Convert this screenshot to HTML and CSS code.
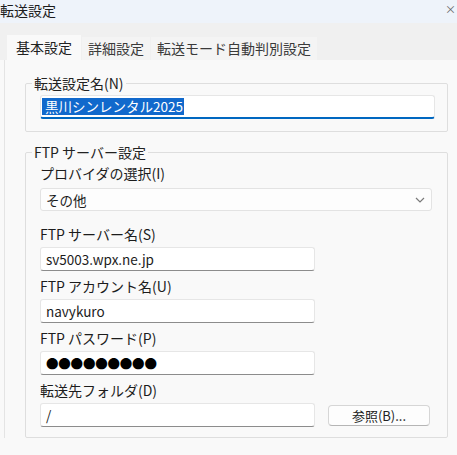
FILE: index.html
```html
<!DOCTYPE html>
<html lang="ja">
<head>
    <meta charset="UTF-8">
    <meta name="viewport" content="width=device-width, initial-scale=1.0">
    <title>転送設定</title>
    <link rel="stylesheet" href="styles.css">
</head>
<body>
    <div class="titlebar">
        <span class="title">転送設定</span>
        <span class="close">×</span>
    </div>
    <div class="tabs">
        <div class="tab active">基本設定</div>
        <div class="tab">詳細設定</div>
        <div class="tab">転送モード自動判別設定</div>
    </div>
    <div class="panel">
        <fieldset class="group">
            <legend>転送設定名(N)</legend>
            <div class="input wide focus"><span class="selected">黒川シンレンタル2025</span></div>
        </fieldset>

        <fieldset class="group second">
            <legend>FTP サーバー設定</legend>
            <div class="label first">プロバイダの選択(I)</div>
            <div class="select">
                <span>その他</span>
                <svg class="chevron" width="10" height="6" viewBox="0 0 10 6">
                    <path d="M1 1 L5 5 L9 1" fill="none" stroke="#7a7a7a" stroke-width="1.2"/>
                </svg>
            </div>

            <div class="label gap">FTP サーバー名(S)</div>
            <div class="input">sv5003.wpx.ne.jp</div>

            <div class="label">FTP アカウント名(U)</div>
            <div class="input">navykuro</div>

            <div class="label">FTP パスワード(P)</div>
            <div class="input"><span class="dots">●●●●●●●●●</span></div>

            <div class="label">転送先フォルダ(D)</div>
            <div class="row">
                <div class="input">/</div>
                <div class="button">参照(B)...</div>
            </div>
        </fieldset>
    </div>
</body>
</html>
```

FILE: styles.css
```css
body {
    margin: 0;
    width: 457px;
    height: 455px;
    overflow: hidden;
    background-color: #f9f9f9;
    font-family: "Noto Sans CJK JP", "Noto Sans", sans-serif;
    font-size: 14px;
    color: #1c1c1c;
}

.titlebar {
    height: 23px;
    display: flex;
    justify-content: space-between;
    align-items: center;
    background-color: #eef3fa;
    overflow: hidden;
}
.title {
    line-height: 20px;
    margin-top: -3px;
}
.close {
    font-size: 11px;
    line-height: 12px;
    color: #666;
    margin-right: 1px;
    margin-top: -6px;
}

.tabs {
    height: 37px;
    display: flex;
    align-items: flex-end;
    gap: 1px;
    padding-left: 7px;
    background-color: #f0f0f0;
}
.tab {
    height: 23px;
    line-height: 22px;
    padding: 0 6px;
    color: #3a3a3a;
    background-color: #f4f4f4;
}
.tab.active {
    height: 25px;
    line-height: 24px;
    padding: 0 9px;
    color: #222;
    background-color: #f9f9f9;
}

.panel {
    margin-left: 4px;
    border-left: 1px solid #e4e4e4;
    padding: 14px 9px 0 20px;
}

.group {
    margin: 0;
    padding: 0 12px 12px 14px;
    border: 1px solid #dedede;
    border-radius: 2px;
    min-width: 0;
}
.group.second {
    margin-top: 11px;
    padding-bottom: 10px;
}
.group legend {
    padding: 0 2px;
    margin-left: -8px;
    line-height: 18px;
    color: #222;
}

.label {
    line-height: 18px;
    margin-top: 6px;
}
.label.first {
    margin-top: 3px;
}
.label.gap {
    margin-top: 14px;
}

.input {
    box-sizing: border-box;
    width: 275px;
    height: 24px;
    margin-top: 4px;
    padding-left: 5px;
    line-height: 22px;
    font-size: 13.5px;
    background-color: #fff;
    border: 1px solid #e6e6e6;
    border-bottom-color: #8c8c8c;
    border-radius: 3px;
}
.input.wide {
    width: 395px;
    margin-top: 3px;
    padding-left: 1px;
}
.input.focus {
    border-bottom: 2px solid #0067c0;
    line-height: 20px;
}
.selected {
    display: inline-block;
    padding: 0 1px 0 3px;
    line-height: 17px;
    color: #fff;
    background-color: #1169cc;
}
.dots {
    font-size: 12.5px;
    letter-spacing: -0.2px;
    color: #000;
}

.select {
    box-sizing: border-box;
    width: 392px;
    height: 23px;
    margin-top: 6px;
    padding: 0 6px 0 5px;
    display: flex;
    align-items: center;
    justify-content: space-between;
    font-size: 13.5px;
    background-color: #fdfdfd;
    border: 1px solid #e3e3e3;
    border-radius: 3px;
}

.row {
    display: flex;
    align-items: center;
    gap: 13px;
}
.button {
    box-sizing: border-box;
    width: 102px;
    height: 21px;
    margin-top: 4px;
    line-height: 19px;
    text-align: center;
    font-size: 13px;
    color: #222;
    background-color: #fdfdfd;
    border: 1px solid #d6d6d6;
    border-bottom-color: #b5b5b5;
    border-radius: 4px;
}
```
